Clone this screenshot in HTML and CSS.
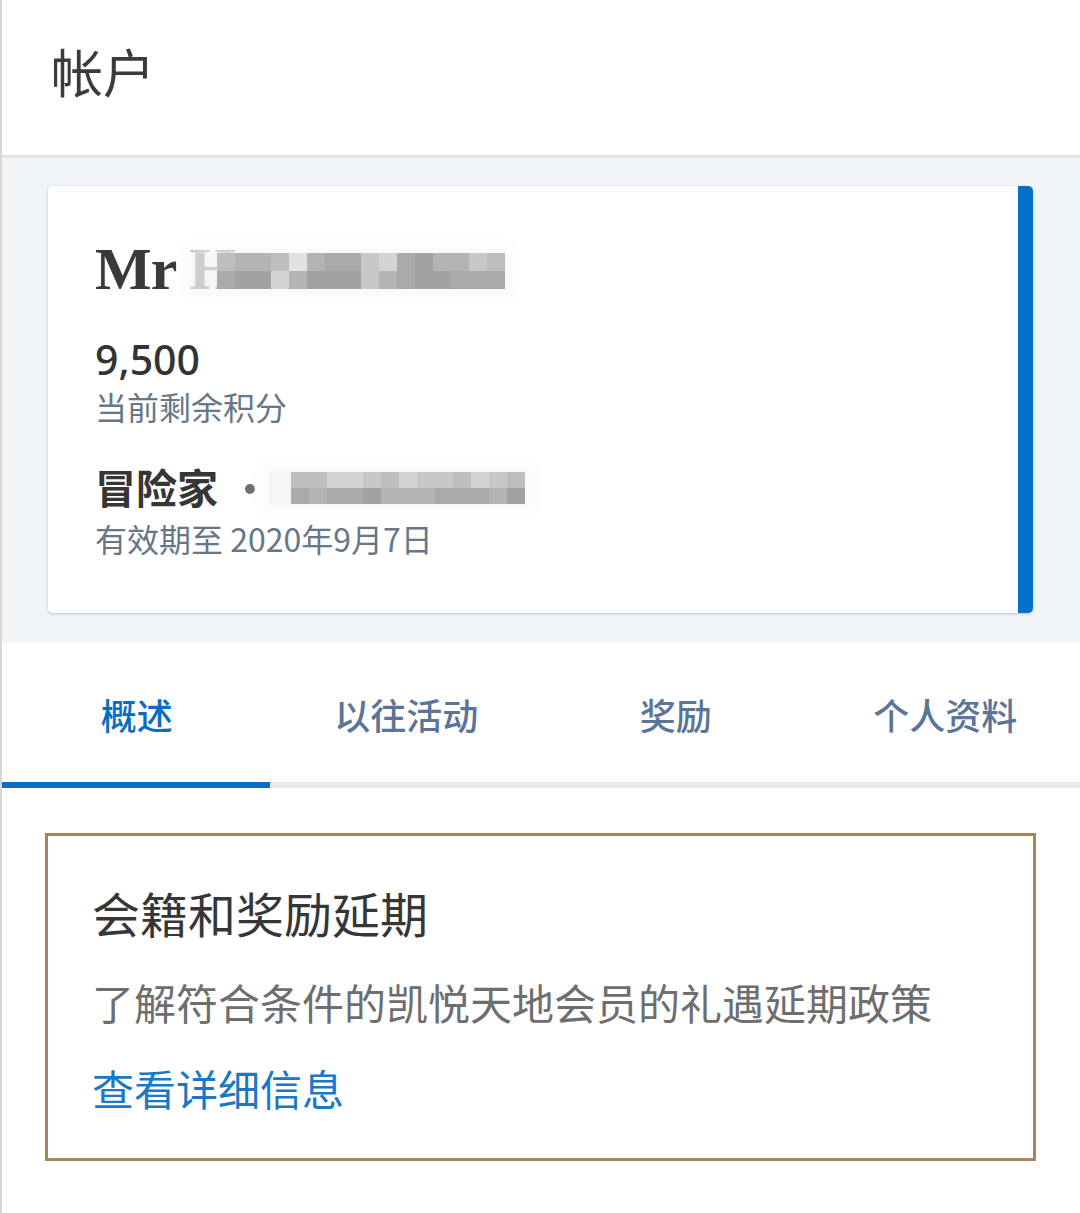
FILE: index.html
```html
<!DOCTYPE html>
<html lang="zh-CN">
<head>
<meta charset="utf-8">
<title>帐户</title>
<link rel="stylesheet" href="styles.css">
</head>
<body>
<div class="page">
  <header class="topbar">
    <h1 class="title">帐户</h1>
  </header>

  <section class="summary">
    <div class="card">
      <div class="name-row">
        <span class="name">Mr H</span>
        <span class="blur blur-name">
          <span class="g4"></span><span class="g3"></span><span class="g3"></span><span class="g4"></span><span class="g7"></span><span class="g3"></span><span class="g2"></span><span class="g2"></span><span class="g5"></span><span class="g6"></span><span class="g2"></span><span class="g1"></span><span class="g3"></span><span class="g3"></span><span class="g5"></span><span class="g4"></span>
          <span class="g2"></span><span class="g1"></span><span class="g1"></span><span class="g6"></span><span class="g3"></span><span class="g1"></span><span class="g1"></span><span class="g1"></span><span class="g5"></span><span class="g3"></span><span class="g2"></span><span class="g1"></span><span class="g1"></span><span class="g2"></span><span class="g2"></span><span class="g2"></span>
        </span>
      </div>
      <div class="points">9,500</div>
      <div class="sub">当前剩余积分</div>
      <div class="tier-row">
        <span class="tier">冒险家</span>
        <span class="dot"></span>
        <span class="blur blur-tier">
          <span class="g4"></span><span class="g4"></span><span class="g6"></span><span class="g6"></span><span class="g5"></span><span class="g4"></span><span class="g6"></span><span class="g5"></span><span class="g5"></span><span class="g4"></span><span class="g6"></span><span class="g5"></span><span class="g4"></span>
          <span class="g2"></span><span class="g3"></span><span class="g2"></span><span class="g2"></span><span class="g1"></span><span class="g3"></span><span class="g3"></span><span class="g3"></span><span class="g2"></span><span class="g2"></span><span class="g2"></span><span class="g3"></span><span class="g1"></span>
        </span>
      </div>
      <div class="sub">有效期至 2020年9月7日</div>
    </div>
  </section>

  <nav class="tabs">
    <a class="tab active">概述</a>
    <a class="tab">以往活动</a>
    <a class="tab">奖励</a>
    <a class="tab">个人资料</a>
  </nav>
  <div class="tab-track"><div class="tab-indicator"></div></div>

  <section class="content">
    <div class="notice">
      <h2 class="notice-title">会籍和奖励延期</h2>
      <p class="notice-text">了解符合条件的凯悦天地会员的礼遇延期政策</p>
      <a class="notice-link">查看详细信息</a>
    </div>
  </section>
</div>
</body>
</html>
```
FILE: styles.css
```css
* { box-sizing: border-box; }
html, body {
  margin: 0;
  padding: 0;
  background: #ffffff;
}
body {
  font-family: "Noto Sans", "Noto Sans CJK SC", sans-serif;
  color: #333333;
}
.page {
  width: 1080px;
  min-height: 1213px;
  border-left: 2px solid #d6d6d6;
  background: #ffffff;
}

/* header */
.topbar {
  height: 158px;
  border-bottom: 3px solid #dfe5eb;
  padding: 38px 0 0 49px;
}
.title {
  margin: 0;
  font-family: "Noto Sans CJK SC", sans-serif;
  font-weight: 400;
  font-size: 52px;
  line-height: 66px;
  color: #3b3b3b;
}

/* summary */
.summary {
  background: #f2f5f8;
  padding: 28px 47px 30px 46px;
  height: 485px;
}
.card {
  height: 427px;
  background: #ffffff;
  border-radius: 5px;
  border-right: 15px solid #0270cc;
  box-shadow: 0 1px 3px rgba(0, 0, 0, 0.22);
  padding: 40px 0 0 47px;
}
.name-row {
  display: flex;
  align-items: center;
  height: 86px;
}
.name {
  font-family: "Liberation Serif", serif;
  font-weight: 700;
  font-size: 60px;
  line-height: 1;
  color: #3a3a38;
  letter-spacing: -1px;
}
.blur {
  display: grid;
  grid-auto-rows: 18px;
  background: rgba(244, 244, 244, 0.8);
  box-shadow: 0 0 10px 8px rgba(248, 248, 248, 0.9);
}
.blur-name {
  grid-template-columns: repeat(16, 18px);
  margin-left: -42px;
  padding-left: 24px;
  margin-top: 4px;
}
.blur-tier {
  grid-template-columns: repeat(13, 18px);
  grid-auto-rows: 16px;
  margin-left: 14px;
  padding-left: 22px;
  margin-top: 4px;
}
.g1 { background: #a2a2a2; }
.g2 { background: #aaaaaa; }
.g3 { background: #b4b4b4; }
.g4 { background: #bebebe; }
.g5 { background: #c8c8c8; }
.g6 { background: #d4d4d4; }
.g7 { background: #e2e2e2; }

.points {
  margin-top: 22px;
  font-family: "Noto Sans", sans-serif;
  font-weight: 500;
  font-size: 41px;
  line-height: 50px;
  color: #333333;
}
.sub {
  font-family: "Noto Sans CJK SC", sans-serif;
  font-size: 32px;
  line-height: 44px;
  color: #677788;
}
.tier-row {
  display: flex;
  align-items: center;
  margin-top: 28px;
  height: 60px;
}
.tier {
  font-family: "Noto Sans CJK SC", sans-serif;
  font-weight: 700;
  font-size: 41px;
  line-height: 60px;
  color: #363636;
}
.dot {
  width: 10px;
  height: 10px;
  border-radius: 50%;
  background: #6e6e6e;
  margin-left: 27px;
  margin-top: 6px;
}

/* tabs */
.tabs {
  display: grid;
  grid-template-columns: repeat(4, 1fr);
  height: 139px;
  align-items: center;
  padding-top: 2px;
}
.tab {
  text-align: center;
  font-family: "Noto Sans CJK SC", sans-serif;
  font-weight: 500;
  font-size: 36px;
  color: #5b7497;
}
.tab.active { color: #0a6ec0; }
.tab-track {
  height: 6px;
  background: #e6e9ee;
}
.tab-indicator {
  width: 268px;
  height: 6px;
  background: #0a6ec5;
}

/* content */
.content {
  padding: 45px 44px 40px 43px;
}
.notice {
  border: 3px solid #a8865a;
  height: 328px;
  padding: 44px 0 0 44px;
}
.notice-title {
  margin: 0;
  font-family: "Noto Sans CJK SC", sans-serif;
  font-weight: 400;
  font-size: 48px;
  line-height: 64px;
  color: #363636;
}
.notice-text {
  margin: 30px 0 0 0;
  font-family: "Noto Sans CJK SC", sans-serif;
  font-size: 42px;
  line-height: 56px;
  color: #6e6e6e;
}
.notice-link {
  display: block;
  margin-top: 30px;
  font-family: "Noto Sans CJK SC", sans-serif;
  font-size: 42px;
  line-height: 56px;
  color: #1a78c4;
}
```
